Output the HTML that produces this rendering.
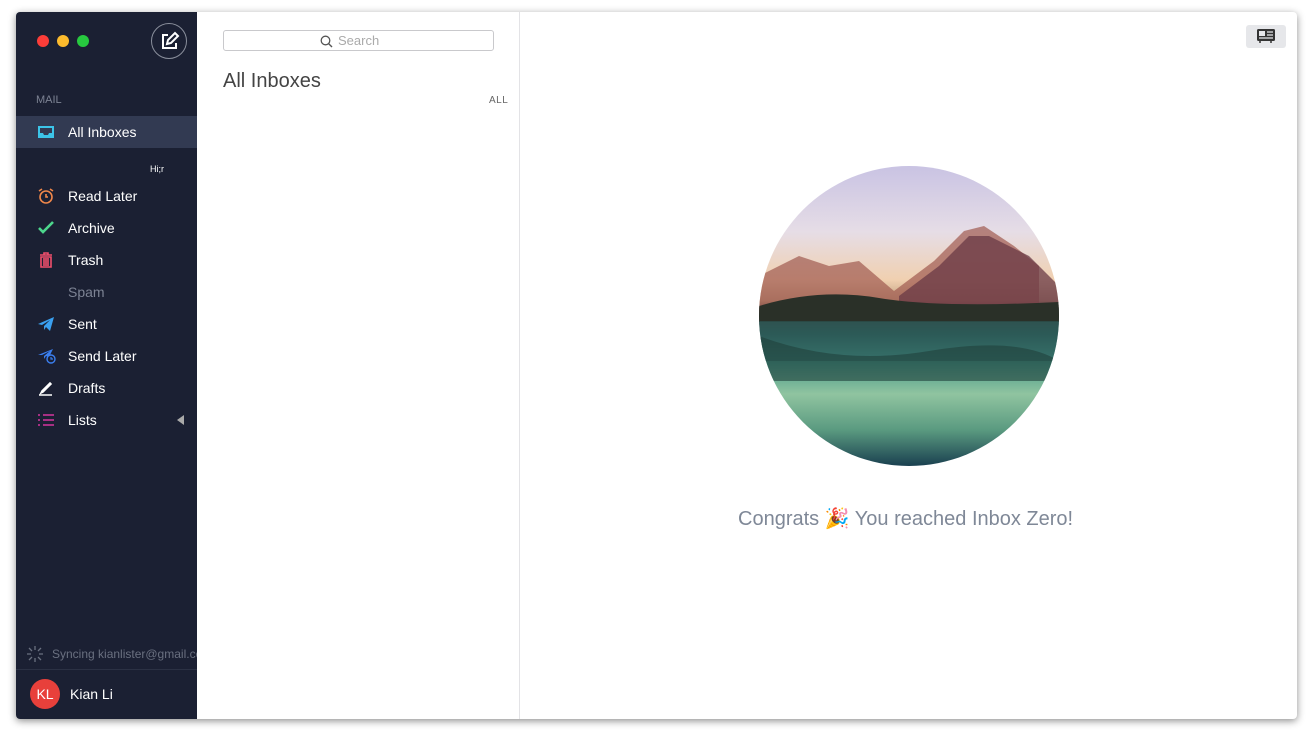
<!DOCTYPE html>
<html><head><meta charset="utf-8"><style>
*{margin:0;padding:0;box-sizing:border-box}
body{width:1314px;height:740px;background:#fff;font-family:"Liberation Sans",sans-serif;position:relative;overflow:hidden}
.win{position:absolute;left:16px;top:12px;width:1281px;height:707px;background:#fff;box-shadow:0 2px 8px rgba(0,0,0,.45);border-radius:4px;overflow:hidden}
.side{position:absolute;left:0;top:0;width:181px;height:707px;background:#1b2033;overflow:hidden}
.dot{position:absolute;top:23px;width:12px;height:12px;border-radius:50%}
.compose{position:absolute;left:135px;top:11px;width:36px;height:36px;border:1.5px solid #8a8f9c;border-radius:50%}
.mail{position:absolute;left:20px;top:82px;font-size:11px;color:#7d8394}
.item{position:absolute;left:0;width:181px;height:32px;color:#fff;font-size:14px}
.item span{position:absolute;left:52px;top:8px}
.item svg{position:absolute;left:21px;top:7px}
.sel{background:#323a52}
.list{position:absolute;left:181px;top:0;width:323px;height:707px;border-right:1.5px solid #e3e3e6}
.search{position:absolute;left:26px;top:18px;width:271px;height:21px;border:1px solid #c9c9cc;border-radius:3px;color:#aaa;font-size:13px}
.circle{position:absolute;left:759px;top:166px;width:300px;height:300px;border-radius:50%;overflow:hidden}
</style></head><body>
<div class="win">
<div class="side">
<div class="dot" style="left:21px;background:#fc3d39"></div>
<div class="dot" style="left:41px;background:#fdbb2d"></div>
<div class="dot" style="left:61px;background:#27c93f"></div>
<div class="compose"><svg width="36" height="36" viewBox="0 0 36 36" style="position:absolute;left:-1.5px;top:-1.5px"><path d="M17 12h-5v13h13v-5" fill="none" stroke="#fff" stroke-width="2"/><path d="M16 21l1-4 7-7 3 3-7 7z" fill="none" stroke="#fff" stroke-width="2"/></svg></div>
<div class="mail">MAIL</div>
<div class="item sel" style="top:104px"><svg width="18" height="18" viewBox="0 0 18 18"><path d="M1 3h16v12H1z" fill="#3cc4e8"/><path d="M3 5h12v5h-3l-1 2H7l-1-2H3z" fill="#323a52"/></svg><span>All Inboxes</span></div>
<div style="position:absolute;left:134px;top:152px;color:#fff;font-size:9px">Hi;r</div>
<div class="item" style="top:168px"><svg width="18" height="18" viewBox="0 0 18 18"><circle cx="9" cy="10" r="6" fill="none" stroke="#f0874a" stroke-width="1.6"/><path d="M9 7v3h2M2 4l3-2M16 4l-3-2" stroke="#f0874a" stroke-width="1.6" fill="none"/></svg><span>Read Later</span></div>
<div class="item" style="top:200px"><svg width="18" height="18" viewBox="0 0 18 18"><path d="M2 9l4 4 10-10" stroke="#4dd68c" stroke-width="2.6" fill="none"/></svg><span>Archive</span></div>
<div class="item" style="top:232px"><svg width="18" height="18" viewBox="0 0 18 18"><path d="M3 4h12M7 4V2h4v2M4 6h10v10H4zM7 7v8M9 7v8M11 7v8" stroke="#f04f6c" stroke-width="1.6" fill="none"/></svg><span>Trash</span></div>
<div class="item" style="top:264px;color:#7d8394"><span>Spam</span></div>
<div class="item" style="top:296px"><svg width="18" height="18" viewBox="0 0 18 18"><path d="M1 9l16-7-4 14-4-4-2 3v-4l6-6-8 5z" fill="#3aa0f0"/></svg><span>Sent</span></div>
<div class="item" style="top:328px"><svg width="20" height="18" viewBox="0 0 20 18"><path d="M1 8l15-6-4 8-3-1-2 3v-3l6-5-8 4z" fill="#3b7ff0"/><circle cx="14" cy="12" r="4" fill="#1b2033" stroke="#3b7ff0" stroke-width="1.4"/><path d="M14 10v2h2" stroke="#3b7ff0" stroke-width="1.2" fill="none"/></svg><span>Send Later</span></div>
<div class="item" style="top:360px"><svg width="18" height="18" viewBox="0 0 18 18"><path d="M5 12l8-8 1 1-8 8-2 1zM2 16h13" stroke="#fff" stroke-width="1.6" fill="none"/></svg><span>Drafts</span></div>
<div class="item" style="top:392px"><svg width="18" height="18" viewBox="0 0 18 18"><path d="M1 4h2M6 4h11M1 9h2M6 9h11M1 14h2M6 14h11" stroke="#d4369e" stroke-width="1.6"/></svg><span>Lists</span><div style="position:absolute;left:161px;top:11px;border-right:7px solid #aaa;border-top:5px solid transparent;border-bottom:5px solid transparent"></div></div>
<svg style="position:absolute;left:10px;top:633px" width="18" height="18" viewBox="0 0 18 18" stroke="#6a7080" stroke-width="1.3"><path d="M9 1v4M9 13v4M1 9h4M13 9h4M3 3l3 3M12 12l3 3M3 15l3-3M12 6l3-3"/></svg>
<div style="position:absolute;left:36px;top:635px;font-size:12px;color:#6a7080;white-space:nowrap">Syncing kianlister@gmail.com</div>
<div style="position:absolute;left:0;top:657px;width:181px;height:1px;background:#2b3144"></div>
<div style="position:absolute;left:14px;top:667px;width:30px;height:30px;border-radius:50%;background:#e8403b;color:#fff;font-size:14px;text-align:center;line-height:30px">KL</div>
<div style="position:absolute;left:54px;top:674px;color:#fff;font-size:14px">Kian Li</div>
</div>
<div class="list">
<div class="search"><svg style="position:absolute;left:96px;top:4px" width="13" height="13" viewBox="0 0 13 13"><circle cx="5.5" cy="5.5" r="4.3" fill="none" stroke="#555" stroke-width="1.3"/><path d="M8.6 8.6l3.4 3.4" stroke="#555" stroke-width="1.4"/></svg><span style="position:absolute;left:114px;top:2px">Search</span></div>
<div style="position:absolute;left:26px;top:58px;font-size:20px;color:#444">All Inboxes</div>
<div style="position:absolute;left:292px;top:83px;font-size:10px;color:#666;letter-spacing:.5px">ALL</div>
</div>
<div style="position:absolute;left:1230px;top:13px;width:40px;height:23px;background:#e6e7ea;border-radius:3px"><svg style="position:absolute;left:11px;top:4px" width="18" height="15" viewBox="0 0 18 15"><rect x="0" y="0" width="18" height="12" rx="1.5" fill="#333"/><rect x="2" y="2" width="6" height="5" fill="#e6e7ea"/><path d="M10 3h6M10 6h6M2 9h14" stroke="#e6e7ea" stroke-width="1.3"/><path d="M3 12v2M14 12v2" stroke="#333" stroke-width="1.5"/></svg></div>
</div>
<div class="circle">
<div style="position:absolute;inset:0;background:linear-gradient(#c9c3e3 0%,#e6dde6 22%,#f0d0b0 38%,#c0a080 45%,#3a3a38 48%,#2e5a55 56%,#4a9a8a 66%,#90c4a0 76%,#5a9a80 88%,#1a4050 100%)"></div>
<svg style="position:absolute;left:0;top:0" width="300" height="300" viewBox="0 0 300 300"><path d="M0 110l40-20 30 10 30-5 35 30 40-30 30-30 20-5 30 20 25 20v50H0z" fill="#a05a50" opacity=".7"/><path d="M140 130l40-30 30-30 20 0 40 20 30 30v20H140z" fill="#6a3a45" opacity=".75"/><path d="M0 140q60-18 120-8t180 4v20H0z" fill="#2a3028"/><path d="M0 155h300v40H0z" fill="#2c5a58" opacity=".6"/><path d="M0 170q80 30 170 15t130 10v20H0z" fill="#20403a" opacity=".6"/></svg>
</div>
<div style="position:absolute;left:738px;top:506px;font-size:20px;color:#7f8897;white-space:nowrap">Congrats 🎉 You reached Inbox Zero!</div>
</body></html>
